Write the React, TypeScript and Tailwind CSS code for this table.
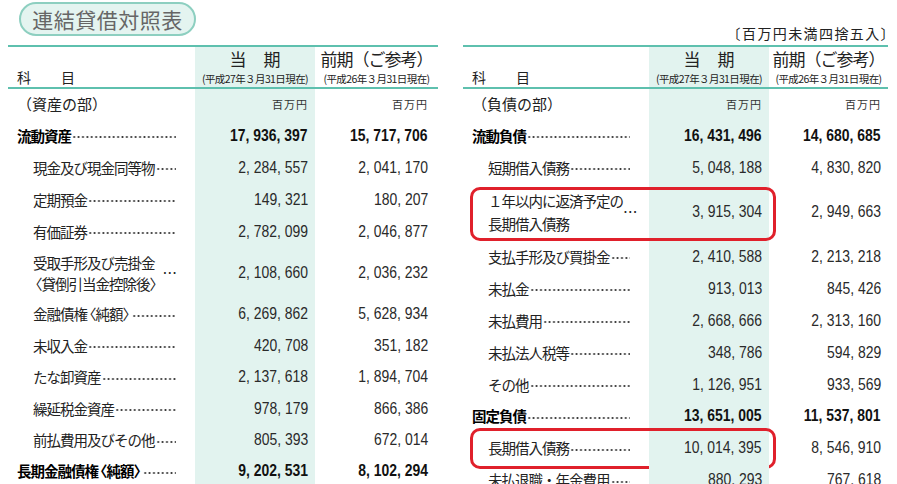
import React from "react";

type Row = {
  label: string | [string, string];
  a?: string;
  b?: string;
  bold?: boolean;
  sub?: boolean;
  unit?: boolean;
  h: string;
  box?: string;
};

const left: Row[] = [
  { label: "（資産の部）", unit: true, h: "h-[31px]" },
  { label: "流動資産", a: "17, 936, 397", b: "15, 717, 706", bold: true, h: "h-[31.5px]" },
  { label: "現金及び現金同等物", a: "2, 284, 557", b: "2, 041, 170", sub: true, h: "h-[32px]" },
  { label: "定期預金", a: "149, 321", b: "180, 207", sub: true, h: "h-[32px]" },
  { label: "有価証券", a: "2, 782, 099", b: "2, 046, 877", sub: true, h: "h-[32px]" },
  { label: ["受取手形及び売掛金", "〈貸倒引当金控除後〉"], a: "2, 108, 660", b: "2, 036, 232", sub: true, h: "h-[51px]" },
  { label: "金融債権〈純額〉", a: "6, 269, 862", b: "5, 628, 934", sub: true, h: "h-[31.5px]" },
  { label: "未収入金", a: "420, 708", b: "351, 182", sub: true, h: "h-[31.5px]" },
  { label: "たな卸資産", a: "2, 137, 618", b: "1, 894, 704", sub: true, h: "h-[31.5px]" },
  { label: "繰延税金資産", a: "978, 179", b: "866, 386", sub: true, h: "h-[31.5px]" },
  { label: "前払費用及びその他", a: "805, 393", b: "672, 014", sub: true, h: "h-[31px]" },
  { label: "長期金融債権〈純額〉", a: "9, 202, 531", b: "8, 102, 294", bold: true, h: "h-[31.5px]" },
];

const right: Row[] = [
  { label: "（負債の部）", unit: true, h: "h-[31px]" },
  { label: "流動負債", a: "16, 431, 496", b: "14, 680, 685", bold: true, h: "h-[31.5px]" },
  { label: "短期借入債務", a: "5, 048, 188", b: "4, 830, 820", sub: true, h: "h-[32px]" },
  { label: ["１年以内に返済予定の", "長期借入債務"], a: "3, 915, 304", b: "2, 949, 663", sub: true, h: "h-[57px]", box: "top-[3px] h-[54px]" },
  { label: "支払手形及び買掛金", a: "2, 410, 588", b: "2, 213, 218", sub: true, h: "h-[32px]" },
  { label: "未払金", a: "913, 013", b: "845, 426", sub: true, h: "h-[32px]" },
  { label: "未払費用", a: "2, 668, 666", b: "2, 313, 160", sub: true, h: "h-[32px]" },
  { label: "未払法人税等", a: "348, 786", b: "594, 829", sub: true, h: "h-[32px]" },
  { label: "その他", a: "1, 126, 951", b: "933, 569", sub: true, h: "h-[32px]" },
  { label: "固定負債", a: "13, 651, 005", b: "11, 537, 801", bold: true, h: "h-[31.5px]" },
  { label: "長期借入債務", a: "10, 014, 395", b: "8, 546, 910", sub: true, h: "h-[32px]", box: "top-[-4px] h-[41px]" },
  { label: "未払退職・年金費用", a: "880, 293", b: "767, 618", sub: true, h: "h-[32px]" },
];

function Label({ s }: { s: string }) {
  const parts = s.split(/([〈〉])/).filter((p) => p !== "");
  return (
    <>
      {parts.map((p, i) =>
        p === "〈" ? (
          <span key={i} className="ml-[-5px]">
            {p}
          </span>
        ) : p === "〉" ? (
          <span key={i} className="mr-[-5px]">
            {p}
          </span>
        ) : (
          <React.Fragment key={i}>{p}</React.Fragment>
        )
      )}
    </>
  );
}

function Num({ v, bold }: { v?: string; bold?: boolean }) {
  return (
    <span
      className={`inline-block origin-right scale-x-[0.82] whitespace-nowrap font-['Liberation_Sans',Arial,sans-serif] text-[17px] leading-[20px] ${
        bold ? "font-bold text-[#111]" : "text-[#2a2a2a]"
      }`}
    >
      {v}
    </span>
  );
}

function TableRow({ r, side }: { r: Row; side: "L" | "R" }) {
  const labelW = side === "L" ? "w-[187px]" : "w-[186px]";
  const priorW = side === "L" ? "w-[123px] pr-[10px]" : "w-[119px] pr-[7px]";
  return (
    <div className={`relative flex ${r.h}`}>
      <div
        className={`${labelW} flex items-center pr-[19px] ${r.sub ? "pl-[25px]" : "pl-[9px]"} ${
          r.bold ? "font-bold text-black" : "text-[#222]"
        } text-[14.5px] tracking-[-1px]`}
      >
        {Array.isArray(r.label) ? (
          <>
            <div className={`flex flex-col ${side === "L" ? "leading-[21px]" : "leading-[23px]"} whitespace-nowrap`}>
              <span>
                <Label s={r.label[0]} />
              </span>
              <span>
                <Label s={r.label[1]} />
              </span>
            </div>
            <span className="flex-1 text-right">…</span>
          </>
        ) : r.unit ? (
          <span className="text-[15px] tracking-[0px]">{r.label}</span>
        ) : (
          <>
            <span className="whitespace-nowrap">
              <Label s={r.label} />
            </span>
            <span className="flex-1 h-[4px] mt-[3px] ml-[1px] bg-[radial-gradient(circle,#3a3a3a_0.85px,transparent_1.15px)] bg-[length:4.4px_4px] bg-repeat-x" />
          </>
        )}
      </div>
      <div className="w-[120px] bg-[#e2f3ef] flex items-center justify-end pr-[7px]">
        {r.unit ? (
          <span className="text-[11px] tracking-[1px] text-[#333]">百万円</span>
        ) : (
          <Num v={r.a} bold={r.bold} />
        )}
      </div>
      <div className={`${priorW} flex items-center justify-end`}>
        {r.unit ? (
          <span className="text-[11px] tracking-[1px] text-[#333]">百万円</span>
        ) : (
          <Num v={r.b} bold={r.bold} />
        )}
      </div>
      {r.box && (
        <div
          className={`absolute left-[7px] w-[306px] ${r.box} rounded-[10px] border-[3px] border-[#e0202b] pointer-events-none`}
        />
      )}
    </div>
  );
}

function Table({ rows, side, date1, date2 }: { rows: Row[]; side: "L" | "R"; date1: string; date2: string }) {
  const labelW = side === "L" ? "w-[187px]" : "w-[186px]";
  const priorW = side === "L" ? "w-[123px]" : "w-[119px]";
  return (
    <div className={side === "L" ? "w-[430px]" : "w-[425px]"}>
      <div className="flex h-[44px] border-t-[2.5px] border-b-[2px] border-[#5ec0ae]">
        <div className={`${labelW} flex items-end pl-[9px] pb-[1px] text-[14px] text-[#222] leading-[18px]`}>
          <span>科</span>
          <span className="ml-[30px]">目</span>
        </div>
        <div className="w-[120px] bg-[#e2f3ef] flex flex-col items-center pt-[2px]">
          <span className="text-[17px] leading-[20px] text-[#222] tracking-[0px]">当　期</span>
          <span className="mt-[3px] text-[10.5px] leading-[14px] tracking-[-0.6px] text-[#222] whitespace-nowrap">
            {date1}
          </span>
        </div>
        <div className={`${priorW} flex flex-col items-center pt-[2px]`}>
          <span className="text-[17px] leading-[20px] text-[#222] tracking-[-1px] whitespace-nowrap">前期（ご参考）</span>
          <span className="mt-[3px] text-[10.5px] leading-[14px] tracking-[-0.6px] text-[#222] whitespace-nowrap">
            {date2}
          </span>
        </div>
      </div>
      {rows.map((r, i) => (
        <TableRow key={i} r={r} side={side} />
      ))}
    </div>
  );
}

export default function App() {
  return (
    <div className="w-[897px] h-[484px] overflow-hidden bg-white font-['Noto_Sans_CJK_JP',sans-serif]">
      <div className="flex h-[45px] justify-between">
        <div className="ml-[19px] mt-[2px] h-[34px] w-[177px] rounded-full border-2 border-[#8dcfc0] bg-[#e4f4f0] flex items-center justify-center text-[21px] tracking-[0.5px] text-[#666] leading-none">
          連結貸借対照表
        </div>
        <div className="mr-[1px] mt-[24px] text-[14px] tracking-[1.4px] leading-[18px] text-[#222] whitespace-nowrap">
          〔百万円未満四捨五入〕
        </div>
      </div>
      <div className="flex pl-[8px] gap-[25px]">
        <Table rows={left} side="L" date1="(平成27年３月31日現在)" date2="(平成26年３月31日現在)" />
        <Table rows={right} side="R" date1="(平成27年３月31日現在)" date2="(平成26年３月31日現在)" />
      </div>
    </div>
  );
}
